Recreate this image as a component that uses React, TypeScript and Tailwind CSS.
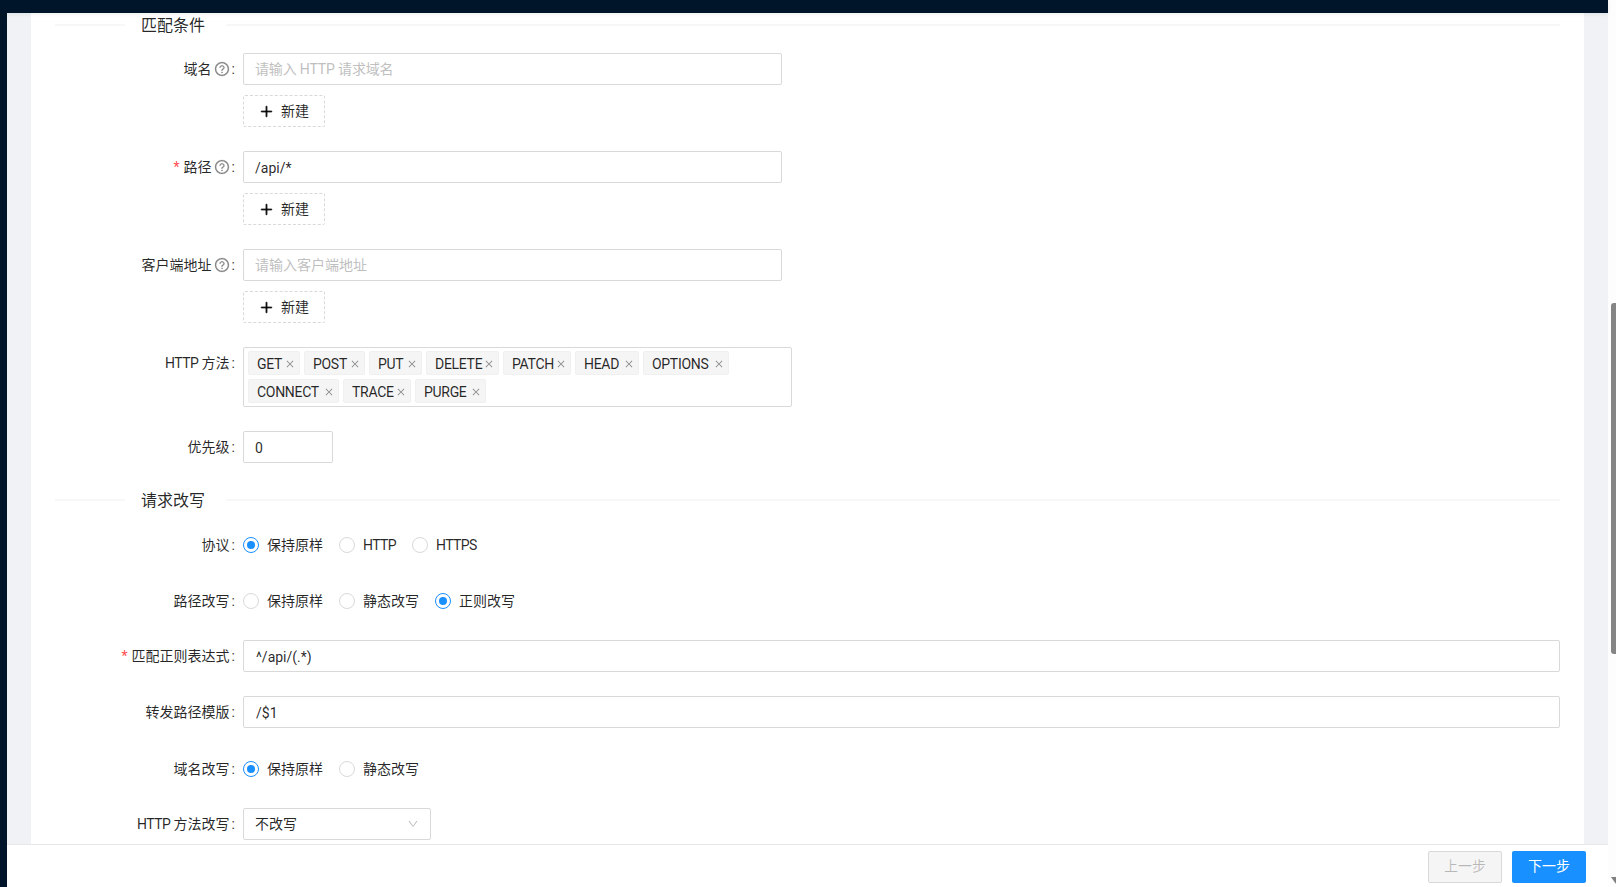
import React from 'react';
import { AiOutlineClose, AiOutlineDown, AiOutlinePlus, AiOutlineQuestionCircle } from 'react-icons/ai';

const methodRows = [
  [
    { name: 'GET', width: 'w-[52px]' },
    { name: 'POST', width: 'w-[61px]' },
    { name: 'PUT', width: 'w-[53px]' },
    { name: 'DELETE', width: 'w-[73px]' },
    { name: 'PATCH', width: 'w-[68px]' },
    { name: 'HEAD', width: 'w-[64px]' },
    { name: 'OPTIONS', width: 'w-[86px]' },
  ],
  [
    { name: 'CONNECT', width: 'w-[91px]' },
    { name: 'TRACE', width: 'w-[68px]' },
    { name: 'PURGE', width: 'w-[71px]' },
  ],
];

const Label: React.FC<{ text: React.ReactNode; required?: boolean; help?: boolean }> = ({ text, required, help }) => (
  <div className="w-[188px] shrink-0 flex items-center justify-end pr-[8px] text-[#000000d9]">
    {required && <span className="text-[#ff4d4f] mr-[4px]">*</span>}
    <span>{text}</span>
    {help && <AiOutlineQuestionCircle size={16} stroke="currentColor" strokeWidth={15} className="ml-[2px] text-[#00000073]" />}
    <span className="ml-[2px]">:</span>
  </div>
);

const Divider: React.FC<{ title: string }> = ({ title }) => (
  <div className="flex items-center h-[24px] text-[16px] text-[#000000d9]">
    <div className="w-[70px] h-[2px] bg-[#f7f7f7]" />
    <span className="pl-[16px] pr-[21px] pt-[2px]">{title}</span>
    <div className="flex-1 h-[2px] bg-[#f7f7f7]" />
  </div>
);

const TextField: React.FC<{ value?: string; placeholder?: string; className: string }> = ({ value, placeholder, className }) => (
  <input
    readOnly
    value={value ?? ''}
    placeholder={placeholder}
    className={`h-[32px] px-[11px] border border-[#d9d9d9] rounded-[2px] text-[#000000d9] placeholder:text-[#bfbfbf] outline-none ${value ? 'pt-[2px]' : ''} ${className}`}
  />
);

const AddButton = () => (
  <button className="mt-[10px] w-[82px] h-[32px] flex items-center justify-center gap-[7px] border border-dashed border-[#d9d9d9] rounded-[2px] text-[#000000d9]">
    <AiOutlinePlus size={15} stroke="currentColor" strokeWidth={50} />
    <span>新建</span>
  </button>
);

const Radio: React.FC<{ text: string; checked?: boolean; className: string }> = ({ text, checked, className }) => (
  <label className={`flex items-center ${className}`}>
    <span className={`w-[16px] h-[16px] rounded-full border flex items-center justify-center ${checked ? 'border-[#1890ff]' : 'border-[#d9d9d9]'}`}>
      {checked && <span className="w-[8px] h-[8px] rounded-full bg-[#1890ff]" />}
    </span>
    <span className="ml-[8px] text-[#000000d9]">{text}</span>
  </label>
);

const MethodTag: React.FC<{ name: string; width: string }> = ({ name, width }) => (
  <span className={`h-[24px] flex items-center justify-between pl-[8px] pr-[4px] pt-[2px] bg-[#f5f5f5] border border-[#f0f0f0] rounded-[2px] text-[#000000d9] tracking-[-0.3px] ${width}`}>
    {name}
    <AiOutlineClose size={10} className="text-[#00000073]" />
  </span>
);

export default function App() {
  return (
    <div className="flex h-[887px] overflow-hidden bg-[#fdfdfd] text-[14px] font-['Roboto','Noto_Sans_CJK_SC',sans-serif]">
      <div className="w-[1608px] flex flex-col">
        <div className="h-[13px] shrink-0 bg-[#001529] shadow-[0_1px_4px_rgba(0,21,41,0.08)] z-10" />
        <div className="flex flex-1 min-h-0">
          <div className="w-[7px] shrink-0 bg-[#001529]" />
          <div className="flex-1 flex flex-col min-w-0">
            {/* Scrolled form */}
            <div className="flex-1 min-h-0 overflow-hidden bg-[#f0f2f5] px-[24px]">
              <div className="h-full bg-white pl-[24px] pr-[24px]">
                <Divider title="匹配条件" />

                <div className="flex mt-[16px] mb-[24px]">
                  <div className="flex h-[32px]"><Label text="域名" help /></div>
                  <div>
                    <TextField placeholder="请输入 HTTP 请求域名" className="block w-[539px] tracking-[-0.15px]" />
                    <AddButton />
                  </div>
                </div>
                <div className="flex mb-[24px]">
                  <div className="flex h-[32px]"><Label text="路径" required help /></div>
                  <div>
                    <TextField value="/api/*" className="block w-[539px]" />
                    <AddButton />
                  </div>
                </div>
                <div className="flex mb-[24px]">
                  <div className="flex h-[32px]"><Label text="客户端地址" help /></div>
                  <div>
                    <TextField placeholder="请输入客户端地址" className="block w-[539px]" />
                    <AddButton />
                  </div>
                </div>

                <div className="flex mb-[24px]">
                  <div className="flex h-[32px]">
                    <Label text={<><span className="tracking-[-0.6px]">HTTP</span> 方法</>} />
                  </div>
                  <div className="w-[549px] h-[60px] border border-[#d9d9d9] rounded-[2px] pl-[4px] pt-[3px] flex flex-col gap-[4px]">
                    {methodRows.map((row) => (
                      <div key={row[0].name} className="flex gap-[4px]">
                        {row.map((tag) => (
                          <MethodTag key={tag.name} name={tag.name} width={tag.width} />
                        ))}
                      </div>
                    ))}
                  </div>
                </div>

                <div className="flex mb-[25px]">
                  <Label text="优先级" />
                  <TextField value="0" className="w-[90px]" />
                </div>

                <Divider title="请求改写" />

                <div className="flex h-[32px] mt-[17px] mb-[24px]">
                  <Label text="协议" />
                  <div className="flex items-center">
                    <Radio text="保持原样" checked className="w-[96px]" />
                    <Radio text="HTTP" className="w-[73px] tracking-[-0.6px]" />
                    <Radio text="HTTPS" className="w-[80px] tracking-[-0.6px]" />
                  </div>
                </div>
                <div className="flex h-[32px] mb-[23px]">
                  <Label text="路径改写" />
                  <div className="flex items-center">
                    <Radio text="保持原样" className="w-[96px]" />
                    <Radio text="静态改写" className="w-[96px]" />
                    <Radio text="正则改写" checked className="w-[96px]" />
                  </div>
                </div>
                <div className="flex mb-[24px]">
                  <Label text="匹配正则表达式" required />
                  <TextField value="^/api/(.*)" className="flex-1 pl-[12px]" />
                </div>
                <div className="flex mb-[25px]">
                  <Label text="转发路径模版" />
                  <TextField value="/$1" className="flex-1 pl-[12px]" />
                </div>
                <div className="flex h-[32px] mb-[23px]">
                  <Label text="域名改写" />
                  <div className="flex items-center">
                    <Radio text="保持原样" checked className="w-[96px]" />
                    <Radio text="静态改写" className="w-[96px]" />
                  </div>
                </div>
                <div className="flex">
                  <Label text={<><span className="tracking-[-0.6px]">HTTP</span> 方法改写</>} />
                  <div className="w-[188px] h-[32px] flex items-center justify-between pl-[11px] pr-[11px] border border-[#d9d9d9] rounded-[2px] text-[#000000d9]">
                    <span>不改写</span>
                    <AiOutlineDown size={12} className="text-[#bfbfbf]" />
                  </div>
                </div>
              </div>
            </div>

            {/* Footer */}
            <div className="h-[43px] shrink-0 bg-white border-t border-[#e8e8e8] flex items-center justify-end pr-[22px] gap-[10px] pt-[1px]">
              <button className="w-[74px] h-[32px] bg-[#f5f5f5] border border-[#d9d9d9] rounded-[2px] text-[#00000040]">上一步</button>
              <button className="w-[74px] h-[32px] bg-[#1890ff] rounded-[2px] text-white">下一步</button>
            </div>
          </div>
        </div>
      </div>

      {/* Scrollbar */}
      <div className="relative w-[8px] shrink-0">
        <div className="ml-[3px] mt-[303px] h-[351px] bg-[#858585] rounded-l-[3px]" />
        <div className="absolute left-[3px] bottom-[3px] w-0 h-0 border-l-[5px] border-r-[5px] border-t-[7px] border-l-transparent border-r-transparent border-t-[#7f7f7f]" />
      </div>
    </div>
  );
}
